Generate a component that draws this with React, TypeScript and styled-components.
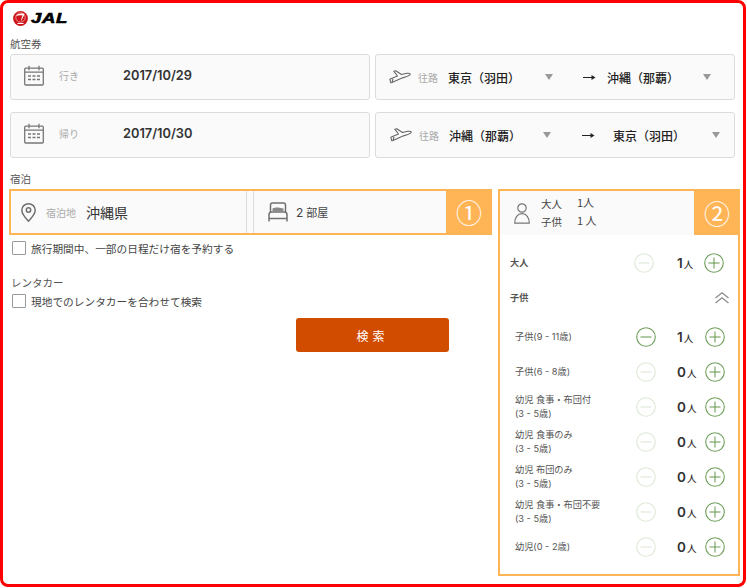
import React from 'react';
import styled, { createGlobalStyle } from 'styled-components';

const Global = createGlobalStyle`
  html, body { margin: 0; padding: 0; background: #fff; }
  body { font-family: "Noto Sans CJK JP", "Noto Sans", sans-serif; color: #333; }
`;

const Frame = styled.div`
  box-sizing: border-box;
  width: 746px;
  height: 587px;
  border: 3px solid #f00;
  border-radius: 8px;
  padding: 0 7px;
  background: #fff;
  overflow: hidden;
`;
const LogoRow = styled.div`
  display: flex;
  align-items: center;
  gap: 3px;
  height: 30px;
  padding-left: 3px;
`;
const LogoText = styled.span`
  font-family: "Liberation Sans", sans-serif;
  font-weight: 700;
  font-style: italic;
  font-size: 14px;
  letter-spacing: 0.5px;
  color: #000;
  -webkit-text-stroke: 0.6px #000;
  line-height: 1;
  transform: scaleX(1.32);
  transform-origin: left center;
`;
const SectionLabel = styled.div`
  font-size: 10.5px;
  line-height: 14px;
  height: 14px;
  color: #555;
  margin-top: ${p => p.$top ?? 0}px;
`;
const FlightGrid = styled.div`
  display: grid;
  grid-template-columns: 360px 360px;
  grid-auto-rows: 46px;
  column-gap: 5px;
  row-gap: 12px;
  margin-top: 3px;
`;
const Field = styled.div`
  box-sizing: border-box;
  display: flex;
  align-items: center;
  border: 1px solid #dcdcdc;
  border-radius: 3px;
  background: #fafafa;
  padding-left: ${p => p.$pad ?? 13}px;
`;
const DateField = styled(Field)`
  padding-bottom: 4px;
`;
const SmallLabel = styled.span`
  font-size: 10px;
  color: #aaa;
  flex: none;
  width: ${p => p.$w}px;
  margin-left: ${p => p.$left}px;
  white-space: nowrap;
`;
const DateText = styled.span`
  font-family: Inter, sans-serif;
  font-weight: 600;
  font-size: 12.8px;
  color: #333;
`;
const City = styled.span`
  flex: none;
  font-size: 12px;
  font-weight: 500;
  color: #222;
  width: ${p => p.$w}px;
  white-space: nowrap;
`;
const Caret = styled.span`
  flex: none;
  width: 0;
  height: 0;
  border-left: 4px solid transparent;
  border-right: 4px solid transparent;
  border-top: 6px solid #999;
  margin-right: ${p => p.$right ?? 0}px;
`;
const ArrowWrap = styled.span`
  flex: none;
  display: flex;
  width: 13px;
  margin-right: ${p => p.$right}px;
`;
const Columns = styled.div`
  display: grid;
  grid-template-columns: 483px 242px;
  column-gap: 6px;
  margin-left: -1px;
  margin-top: 3px;
`;
const LeftCol = styled.div`
  display: flex;
  flex-direction: column;
  align-items: flex-start;
`;
const StayBar = styled.div`
  box-sizing: border-box;
  width: 483px;
  height: 46px;
  display: flex;
  border: 2px solid #ffb455;
  background: #fafafa;
`;
const StayPlace = styled.div`
  box-sizing: border-box;
  width: 236px;
  display: flex;
  align-items: center;
  padding-left: 10px;
  border-right: 1px solid #ddd;
`;
const StayRooms = styled.div`
  box-sizing: border-box;
  width: 193px;
  margin-left: 6px;
  display: flex;
  align-items: center;
  padding-left: 14px;
  gap: 8px;
  border-left: 1px solid #ddd;
  font-size: 11px;
  color: #444;
`;
const RoomCount = styled.span`
  font-family: Inter, sans-serif;
  font-size: 12px;
  margin-right: 3px;
`;
const PlaceName = styled.span`
  font-size: 14px;
  color: #333;
`;
const NumberTab = styled.div`
  flex: 1;
  display: flex;
  align-items: center;
  justify-content: center;
  background: #ffb455;
  color: #fff;
  font-size: 26px;
  line-height: 1;
  padding-left: 2px;
`;
const CheckRow = styled.label`
  display: flex;
  align-items: center;
  gap: 5px;
  margin-left: 3px;
  font-size: 10.7px;
  color: #444;
  height: 16px;
  margin-top: ${p => p.$top}px;
`;
const CheckBox = styled.span`
  box-sizing: border-box;
  width: 14px;
  height: 14px;
  border: 1px solid #999;
  border-radius: 1px;
  background: #fff;
  flex: none;
`;
const RentalLabel = styled.div`
  font-size: 10.5px;
  line-height: 14px;
  color: #555;
  margin: 20px 0 3px 2px;
`;
const SearchButton = styled.button`
  align-self: flex-start;
  width: 153px;
  height: 34px;
  margin: 9px 0 0 287px;
  border: none;
  border-radius: 3px;
  background: #d24c00;
  color: #fff;
  font-family: inherit;
  font-size: 12px;
  letter-spacing: 4px;
  padding: 0;
`;
const Panel = styled.div`
  box-sizing: border-box;
  height: 387px;
  border: 2px solid #ffb455;
  display: flex;
  flex-direction: column;
`;
const PanelHead = styled.div`
  display: flex;
  height: 44px;
  flex: none;
  background: #fafafa;
`;
const HeadInfo = styled.div`
  flex: none;
  width: 194px;
  display: flex;
  align-items: center;
  padding-left: 14px;
  box-sizing: border-box;
`;
const HeadGrid = styled.div`
  display: grid;
  grid-template-columns: 36px auto;
  grid-auto-rows: 18px;
  margin-left: 11px;
  font-size: 10.5px;
  color: #444;
  line-height: 18px;
`;
const HeadValue = styled.span`
  margin-top: -2px;
  font-size: 11px;
`;
const Rows = styled.div`
  padding-top: 10px;
`;
const Row = styled.div`
  display: flex;
  align-items: center;
  height: ${p => p.$h ?? 35}px;
  padding-left: ${p => p.$pad}px;
`;
const RowLabel = styled.div`
  flex: none;
  box-sizing: border-box;
  width: ${p => p.$w}px;
  font-family: Inter, "Noto Sans CJK JP", sans-serif;
  font-size: 9.2px;
  font-weight: ${p => (p.$bold ? 700 : 400)};
  color: #555;
  line-height: 14px;
  white-space: pre-line;
`;
const Count = styled.span`
  flex: none;
  width: 20px;
  margin: 0 ${p => p.$after}px 0 ${p => p.$before}px;
  font-family: Inter, sans-serif;
  font-weight: 600;
  font-size: 13.5px;
  color: #333;
  display: flex;
  align-items: baseline;
  white-space: nowrap;
`;
const CountUnit = styled.span`
  font-family: "Noto Sans CJK JP", sans-serif;
  font-size: 9.5px;
  font-weight: 500;
  margin-left: 1px;
`;
const Spacer = styled.div`
  flex: 1;
`;
const ChevronWrap = styled.span`
  display: flex;
  margin-right: 9px;
`;
const Svg = styled.svg`
  flex: none;
  display: block;
`;

const JalMark = () => (
  <Svg width="15" height="15" viewBox="0 0 15 15">
    <circle cx="7.5" cy="7.5" r="7.4" fill="#cf1419" />
    <path d="M3 5c1.800-2.200 5.500-3 8.500-1.900-.8 2.400-2.300 4.600-3.100 7.300-.4-2.200.3-4.300 1.300-6C7.500 3.900 5 4.100 3 5z" fill="#fff" />
    <circle cx="7.500" cy="6.500" r="4.700" fill="none" stroke="#fff" strokeWidth="0.500" />
    <rect x="4.500" y="12" width="6" height="1" fill="#fff" />
  </Svg>
);
const CalendarIcon = () => (
  <Svg width="20" height="21" viewBox="0 0 20 21" fill="none" stroke="#777" strokeWidth="1.300">
    <rect x="0.700" y="3.200" width="18.600" height="16.800" rx="1" />
    <path d="M0.700 7.200h18.600M5 0.800v4.500M15 0.800v4.500" />
    <path d="M4 11h3M8.500 11h3M13 11h3M4 14.500h3M8.500 14.500h3M13 14.500h3" strokeWidth="1.600" />
  </Svg>
);
const PlaneIcon = () => (
  <Svg width="22" height="14" viewBox="0 0 22 14" fill="none" stroke="#666" strokeWidth="1.100" strokeLinejoin="round">
    <path d="M.8 9.200L5.500 7.200 8.500 6 4.800 1.200 6.800.8 12.500 4.500 18 3.300c2.500-.4 3.500.5 3 1.500-1 1.400-5 2.400-8 3.200L3 12.500l-1.200.3z" />
    <path d="M3 12.500L4 9" />
  </Svg>
);
const PinIcon = () => (
  <Svg width="15" height="19" viewBox="0 0 15 19" fill="none" stroke="#707070" strokeWidth="1.500">
    <path d="M7.500.8C3.700.8.800 3.600.8 7.200c0 3.800 3.700 7.800 6.700 11 3-3.200 6.700-7.200 6.700-11C14.200 3.600 11.300.8 7.500.8z" />
    <circle cx="7.500" cy="7" r="2.200" />
  </Svg>
);
const BedIcon = () => (
  <Svg width="20" height="20" viewBox="0 0 20 20" fill="none" stroke="#707070" strokeWidth="1.500">
    <path d="M2.500 10V3c0-1.200.8-2 2-2h11c1.200 0 2 .8 2 2v7" />
    <path d="M1 19.500V13c0-1.800 1-3 2.500-3h13c1.500 0 2.500 1.200 2.500 3v6.500M1 16.500h18" />
    <path d="M4.500 9.500V6.500c2-1 5-1.200 7-.8l4 .8v3z" fill="#888" stroke="none" />
  </Svg>
);
const PersonIcon = () => (
  <Svg width="16" height="21" viewBox="0 0 16 21" fill="none" stroke="#777" strokeWidth="1.200">
    <circle cx="8" cy="5" r="4.200" />
    <path d="M.7 20.200h14.600c0-5.500-2.800-9.500-7.300-9.500S.7 14.700.7 20.200z" />
  </Svg>
);
const DoubleChevron = () => (
  <Svg width="14" height="12" viewBox="0 0 14 12" fill="none" stroke="#888" strokeWidth="1.200">
    <path d="M.5 6L7 .8 13.500 6M.5 11L7 5.800 13.500 11" />
  </Svg>
);
const RoundButton = ({ kind, active }: { kind: 'minus' | 'plus'; active: boolean }) => {
  const color = active ? '#6f9f5a' : '#dde8d6';
  return (
    <Svg width="20" height="20" viewBox="0 0 20 20" fill="none" stroke={color} strokeWidth="1.100">
      <circle cx="10" cy="10" r="9.300" />
      <path d="M4.500 10h11" />
      {kind === 'plus' && <path d="M10 4.500v11" />}
    </Svg>
  );
};
const ArrowIcon = () => (
  <Svg width="13" height="7" viewBox="0 0 13 7">
    <path d="M0 3h9V3.900H0z" fill="#222" />
    <path d="M8.500 1l4 2.500-4 2.500z" fill="#222" />
  </Svg>
);

const flights = [
  { pad: 13, from: '東京（羽田）', to: '沖縄（那覇）', w1: 97, g1: 30, g2: 11, w2: 96 },
  { pad: 14, from: '沖縄（那覇）', to: '東京（羽田）', w1: 94, g1: 31, g2: 18, w2: 99 },
];
const dates = [
  { label: '行き', value: '2017/10/29' },
  { label: '帰り', value: '2017/10/30' },
];
const children = [
  { label: '子供(9 - 11歳)', n: 1 },
  { label: '子供(6 - 8歳)', n: 0 },
  { label: '幼児 食事・布団付\n(3 - 5歳)', n: 0 },
  { label: '幼児 食事のみ\n(3 - 5歳)', n: 0 },
  { label: '幼児 布団のみ\n(3 - 5歳)', n: 0 },
  { label: '幼児 食事・布団不要\n(3 - 5歳)', n: 0 },
  { label: '幼児(0 - 2歳)', n: 0 },
];

export default function App() {
  return (
    <>
      <Global />
      <Frame>
        <LogoRow>
          <JalMark />
          <LogoText>JAL</LogoText>
        </LogoRow>
        <SectionLabel $top={4}>航空券</SectionLabel>
        <FlightGrid>
          {dates.map((d, i) => (
            <React.Fragment key={d.label}>
              <DateField>
                <CalendarIcon />
                <SmallLabel $left={15} $w={64}>{d.label}</SmallLabel>
                <DateText>{d.value}</DateText>
              </DateField>
              <Field $pad={flights[i].pad}>
                <PlaneIcon />
                <SmallLabel $left={7} $w={30}>往路</SmallLabel>
                <City $w={flights[i].w1}>{flights[i].from}</City>
                <Caret $right={flights[i].g1} />
                <ArrowWrap $right={flights[i].g2}><ArrowIcon /></ArrowWrap>
                <City $w={flights[i].w2}>{flights[i].to}</City>
                <Caret />
              </Field>
            </React.Fragment>
          ))}
        </FlightGrid>
        <SectionLabel $top={14}>宿泊</SectionLabel>
        <Columns>
          <LeftCol>
            <StayBar>
              <StayPlace>
                <PinIcon />
                <SmallLabel $left={10} $w={40}>宿泊地</SmallLabel>
                <PlaceName>沖縄県</PlaceName>
              </StayPlace>
              <StayRooms>
                <BedIcon />
                <span><RoomCount>2</RoomCount>部屋</span>
              </StayRooms>
              <NumberTab>①</NumberTab>
            </StayBar>
            <CheckRow $top={5}>
              <CheckBox />
              旅行期間中、一部の日程だけ宿を予約する
            </CheckRow>
            <RentalLabel>レンタカー</RentalLabel>
            <CheckRow $top={0}>
              <CheckBox />
              現地でのレンタカーを合わせて検索
            </CheckRow>
            <SearchButton>検索</SearchButton>
          </LeftCol>
          <Panel>
            <PanelHead>
              <HeadInfo>
                <PersonIcon />
                <HeadGrid>
                  <span>大人</span><HeadValue>1人</HeadValue>
                  <span>子供</span><HeadValue>1 人</HeadValue>
                </HeadGrid>
              </HeadInfo>
              <NumberTab>②</NumberTab>
            </PanelHead>
            <Rows>
              <Row $pad={10}>
                <RowLabel $bold $w={124}>大人</RowLabel>
                <RoundButton kind="minus" active={false} />
                <Count $before={23} $after={7}>1<CountUnit>人</CountUnit></Count>
                <RoundButton kind="plus" active />
              </Row>
              <Row $pad={10}>
                <RowLabel $bold $w={124}>子供</RowLabel>
                <Spacer />
                <ChevronWrap><DoubleChevron /></ChevronWrap>
              </Row>
              <Row $h={4} $pad={0} />
              {children.map(c => (
                <Row key={c.label} $pad={15}>
                  <RowLabel $w={121}>{c.label}</RowLabel>
                  <RoundButton kind="minus" active={c.n > 0} />
                  <Count $before={21} $after={8}>{c.n}<CountUnit>人</CountUnit></Count>
                  <RoundButton kind="plus" active />
                </Row>
              ))}
            </Rows>
          </Panel>
        </Columns>
      </Frame>
    </>
  );
}
